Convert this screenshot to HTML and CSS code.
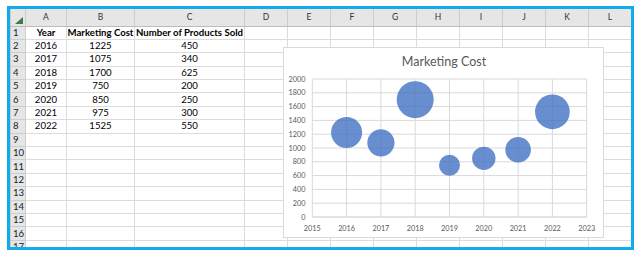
FILE: index.html
```html
<!DOCTYPE html>
<html lang="en">
<head>
    <meta charset="UTF-8">
    <title>Marketing Cost Bubble Chart</title>
    <link rel="stylesheet" href="styles.css">
</head>
<body>
    <div class="frame">
        <table class="sheet">
            <colgroup>
                <col class="c-rh"><col class="c-a"><col class="c-b"><col class="c-c"><col class="c-n">
                <col class="c-n"><col class="c-n"><col class="c-n"><col class="c-n"><col class="c-n">
                <col class="c-n"><col class="c-n"><col class="c-n">
            </colgroup>
            <thead>
                <tr class="col-head">
                    <th class="corner"><svg width="8" height="7" viewBox="0 0 8 7"><polygon points="8,0 8,7 0,7" fill="#3f7a48"/></svg></th>
                    <th>A</th><th>B</th><th>C</th><th>D</th><th>E</th><th>F</th>
                    <th>G</th><th>H</th><th>I</th><th>J</th><th>K</th><th>L</th>
                </tr>
            </thead>
            <tbody>
                <tr><th>1</th><td class="b">Year</td><td class="b">Marketing Cost</td><td class="b">Number of Products Sold</td><td></td><td></td><td></td><td></td><td></td><td></td><td></td><td></td><td></td></tr>
                <tr><th>2</th><td>2016</td><td>1225</td><td>450</td><td></td><td></td><td></td><td></td><td></td><td></td><td></td><td></td><td></td></tr>
                <tr><th>3</th><td>2017</td><td>1075</td><td>340</td><td></td><td></td><td></td><td></td><td></td><td></td><td></td><td></td><td></td></tr>
                <tr><th>4</th><td>2018</td><td>1700</td><td>625</td><td></td><td></td><td></td><td></td><td></td><td></td><td></td><td></td><td></td></tr>
                <tr><th>5</th><td>2019</td><td>750</td><td>200</td><td></td><td></td><td></td><td></td><td></td><td></td><td></td><td></td><td></td></tr>
                <tr><th>6</th><td>2020</td><td>850</td><td>250</td><td></td><td></td><td></td><td></td><td></td><td></td><td></td><td></td><td></td></tr>
                <tr><th>7</th><td>2021</td><td>975</td><td>300</td><td></td><td></td><td></td><td></td><td></td><td></td><td></td><td></td><td></td></tr>
                <tr><th>8</th><td>2022</td><td>1525</td><td>550</td><td></td><td></td><td></td><td></td><td></td><td></td><td></td><td></td><td></td></tr>
                <tr><th>9</th><td></td><td></td><td></td><td></td><td></td><td></td><td></td><td></td><td></td><td></td><td></td><td></td></tr>
                <tr><th>10</th><td></td><td></td><td></td><td></td><td></td><td></td><td></td><td></td><td></td><td></td><td></td><td></td></tr>
                <tr><th>11</th><td></td><td></td><td></td><td></td><td></td><td></td><td></td><td></td><td></td><td></td><td></td><td></td></tr>
                <tr><th>12</th><td></td><td></td><td></td><td></td><td></td><td></td><td></td><td></td><td></td><td></td><td></td><td></td></tr>
                <tr><th>13</th><td></td><td></td><td></td><td></td><td></td><td></td><td></td><td></td><td></td><td></td><td></td><td></td></tr>
                <tr><th>14</th><td></td><td></td><td></td><td></td><td></td><td></td><td></td><td></td><td></td><td></td><td></td><td></td></tr>
                <tr><th>15</th><td></td><td></td><td></td><td></td><td></td><td></td><td></td><td></td><td></td><td></td><td></td><td></td></tr>
                <tr><th>16</th><td></td><td></td><td></td><td></td><td></td><td></td><td></td><td></td><td></td><td></td><td></td><td></td></tr>
                <tr><th>17</th><td></td><td></td><td></td><td></td><td></td><td></td><td></td><td></td><td></td><td></td><td></td><td></td></tr>
            </tbody>
        </table>

        <!-- chart object sits on top of the sheet -->
        <div class="chart">
            <svg width="321" height="191" viewBox="0 0 321 191">
                <text class="title" x="161" y="19" text-anchor="middle">Marketing Cost</text>
                <g class="grid">
                    <line x1="29.3" y1="156.2" x2="303.7" y2="156.2"/>
                    <line x1="29.3" y1="142.4" x2="303.7" y2="142.4"/>
                    <line x1="29.3" y1="128.6" x2="303.7" y2="128.6"/>
                    <line x1="29.3" y1="114.8" x2="303.7" y2="114.8"/>
                    <line x1="29.3" y1="101" x2="303.7" y2="101"/>
                    <line x1="29.3" y1="87.2" x2="303.7" y2="87.2"/>
                    <line x1="29.3" y1="73.4" x2="303.7" y2="73.4"/>
                    <line x1="29.3" y1="59.6" x2="303.7" y2="59.6"/>
                    <line x1="29.3" y1="45.8" x2="303.7" y2="45.8"/>
                    <line x1="29.3" y1="32" x2="303.7" y2="32"/>
                    <line x1="29.3" y1="32" x2="29.3" y2="170"/>
                    <line x1="63.6" y1="32" x2="63.6" y2="170"/>
                    <line x1="97.9" y1="32" x2="97.9" y2="170"/>
                    <line x1="132.2" y1="32" x2="132.2" y2="170"/>
                    <line x1="166.5" y1="32" x2="166.5" y2="170"/>
                    <line x1="200.8" y1="32" x2="200.8" y2="170"/>
                    <line x1="235.1" y1="32" x2="235.1" y2="170"/>
                    <line x1="269.4" y1="32" x2="269.4" y2="170"/>
                    <line x1="303.7" y1="32" x2="303.7" y2="170"/>
                </g>
                <line class="axis" x1="29.3" y1="170" x2="303.7" y2="170"/>
                <g class="ylabels" text-anchor="end">
                    <text x="22.5" y="172.5">0</text>
                    <text x="22.5" y="158.7">200</text>
                    <text x="22.5" y="144.9">400</text>
                    <text x="22.5" y="131.1">600</text>
                    <text x="22.5" y="117.3">800</text>
                    <text x="22.5" y="103.5">1000</text>
                    <text x="22.5" y="89.7">1200</text>
                    <text x="22.5" y="75.9">1400</text>
                    <text x="22.5" y="62.1">1600</text>
                    <text x="22.5" y="48.3">1800</text>
                    <text x="22.5" y="34.5">2000</text>
                </g>
                <g class="xlabels" text-anchor="middle">
                    <text x="29.3" y="184">2015</text>
                    <text x="63.6" y="184">2016</text>
                    <text x="97.9" y="184">2017</text>
                    <text x="132.2" y="184">2018</text>
                    <text x="166.5" y="184">2019</text>
                    <text x="200.8" y="184">2020</text>
                    <text x="235.1" y="184">2021</text>
                    <text x="269.4" y="184">2022</text>
                    <text x="303.7" y="184">2023</text>
                </g>
                <g class="bubbles">
                    <circle cx="63.6" cy="85.5" r="15.5"/>
                    <circle cx="97.9" cy="95.8" r="13.6"/>
                    <circle cx="132.2" cy="52.7" r="18.5"/>
                    <circle cx="166.5" cy="118.25" r="10.5"/>
                    <circle cx="200.8" cy="111.35" r="11.7"/>
                    <circle cx="235.1" cy="102.7" r="12.8"/>
                    <circle cx="269.4" cy="64.8" r="17.35"/>
                </g>
            </svg>
        </div>
    </div>
</body>
</html>
```

FILE: styles.css
```css
body {
    margin: 0;
    padding: 0;
    background: #fff;
    font-family: Lato, "Liberation Sans", sans-serif;
}

.frame {
    position: relative;
    width: 621px;
    height: 238px;
    margin: 6px 0 0 7px;
    border: 3px solid #12acea;
    overflow: hidden;
    background: #fff;
}

.sheet {
    table-layout: fixed;
    border-collapse: collapse;
    width: 619px;
    font-size: 9.6px;
    color: #000;
}

.c-rh { width: 15px; }
.c-a { width: 41px; }
.c-b { width: 68px; }
.c-c { width: 110px; }
.c-n { width: 43px; }

.sheet tr {
    height: 13.4px;
}

.sheet td {
    padding: 0;
    border: 1px solid #dcdcdc;
    text-align: center;
    line-height: 12px;
    white-space: nowrap;
    overflow: hidden;
}

.sheet td.b {
    font-weight: bold;
}

.sheet th {
    padding: 0 0 0 2px;
    background: #e6e6e6;
    border: 1px solid #cdcdcd;
    font-weight: normal;
    color: #222;
    text-align: left;
    line-height: 12px;
}

.sheet .col-head {
    height: 17px;
}

.sheet .col-head th {
    text-align: center;
    font-size: 8.5px;
    color: #333;
    padding: 0;
    border-top: none;
    border-bottom: 1px solid #bdbdbd;
}

.sheet .corner {
    text-align: right;
    vertical-align: bottom;
}

.sheet .corner svg {
    display: block;
    margin: 0 2px 2px auto;
}

.chart {
    position: absolute;
    left: 273px;
    top: 38px;
    width: 319px;
    height: 189px;
    border: 1px solid #d9d9d9;
    background: #fff;
}

.chart svg {
    display: block;
    margin: -1px;
}

.title {
    font-size: 12.5px;
    fill: #595959;
}

.grid line {
    stroke: #d9d9d9;
    stroke-width: 1;
}

.axis {
    stroke: #c8c8c8;
    stroke-width: 1;
}

.ylabels text,
.xlabels text {
    font-size: 7.3px;
    fill: #595959;
}

.bubbles circle {
    fill: #4472c4;
    fill-opacity: 0.8;
}
```
